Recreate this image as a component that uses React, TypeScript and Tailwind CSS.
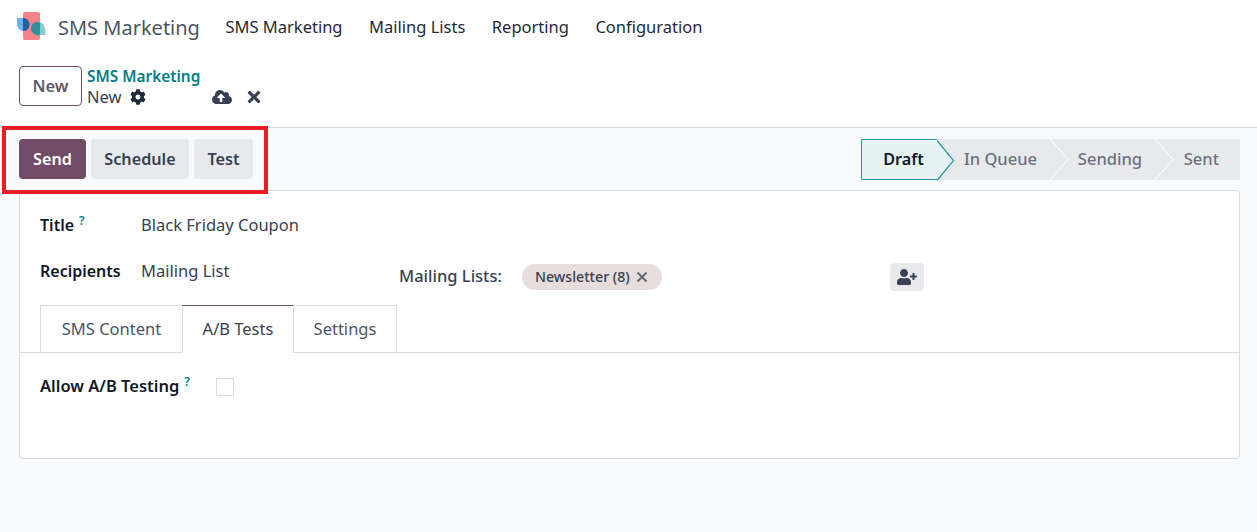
import { FaCog, FaCloudUploadAlt, FaTimes, FaUserPlus } from "react-icons/fa";

const menuItems = ["SMS Marketing", "Mailing Lists", "Reporting", "Configuration"];

function Logo() {
    return (
        <svg width="30" height="30" viewBox="0 0 30 30" className="mb-px shrink-0">
            <rect x="6" y="0" width="17" height="28" rx="2" fill="#fb8288" />
            <path d="M0 6 L6.5 6 C10 6 12.5 9 12.5 12.5 C12.5 16 10 19 6.5 19 C3 19 0 16 0 12 Z" fill="#6fb3ee" />
            <path d="M6 6 L6.5 6 C10 6 12.5 9 12.5 12.5 C12.5 16 10 19 6.5 19 L6 19 Z" fill="#1f5fa6" />
            <path d="M22 10 C26 10 28.5 14 28.5 23 L22 23 Z" fill="#7fd0cc" />
            <path d="M23 10.5 A6.5 6.5 0 1 0 23 22.5 Z" fill="#2f8f94" />
        </svg>
    );
}

function Chevron({ active }: { active?: boolean }) {
    return (
        <svg width="20" height="41" viewBox="0 0 20 41" className="absolute top-0 left-full z-10">
            {active ? (
                <path d="M0 0.5 L16.5 20.5 L0 40.5" fill="#e6f2f3" stroke="#1f9aa3" strokeWidth="1.2" />
            ) : (
                <>
                    <path d="M0 0 L18 20.5 L0 41 Z" fill="#e7e9ed" />
                    <path d="M0 0 L18 20.5 L0 41" fill="none" stroke="#ffffff" strokeWidth="1" />
                </>
            )}
        </svg>
    );
}

export default function App() {
    return (
        <div className="h-[532px] w-[1257px] overflow-hidden bg-[#f9fafb] font-['Noto_Sans','Open_Sans',sans-serif] text-[16.5px] text-[#374151] relative">
            {/* top nav */}
            <nav className="flex h-[55px] items-center bg-white pl-[17px]">
                <Logo />
                <span className="ml-[11px] text-[20px] text-[#4b5563]">SMS Marketing</span>
                <div className="ml-[25.5px] flex gap-[26.5px] text-[#1f2937]">
                    {menuItems.map((m) => (
                        <span key={m}>{m}</span>
                    ))}
                </div>
            </nav>

            {/* control panel */}
            <div className="flex h-[73px] items-start border-b border-[#d8dadd] bg-white pl-[19px] pt-[11px]">
                <button className="h-[40px] w-[63px] rounded-[4px] border border-[#714b67] font-semibold text-[#5f5a64]">New</button>
                <div className="ml-[5px] flex flex-col leading-[20px]">
                    <span className="mt-px text-[15.4px] font-semibold text-[#017e84]">SMS Marketing</span>
                    <div className="-mt-px flex h-[21px] items-center text-[#374151]">
                        <span>New</span>
                        <FaCog className="ml-[8px] text-[16px] text-[#1f2937]" />
                        <FaCloudUploadAlt className="ml-[66px] text-[20px] text-[#374151]" />
                        <FaTimes className="ml-[13px] text-[18px] text-[#374151]" />
                    </div>
                </div>
            </div>

            {/* status bar */}
            <div className="flex h-[62px] items-start justify-between pl-[19px] pr-[17px] pt-[11px]">
                <div className="flex gap-[5px] text-[16.2px] font-semibold">
                    <button className="h-[40px] w-[67px] rounded-[4px] bg-[#714b67] pt-px text-white">Send</button>
                    <button className="h-[40px] w-[98px] rounded-[4px] bg-[#e7e9ed] pt-px text-[#374151]">Schedule</button>
                    <button className="h-[40px] w-[59px] rounded-[4px] bg-[#e7e9ed] pt-px text-[#374151]">Test</button>
                </div>
                <div className="-ml-px flex h-[41px] bg-[#e7e9ed] font-medium text-[#6b7280]">
                    <div className="relative flex w-[76px] items-center justify-center rounded-l-[2px] border border-r-0 border-[#1f9aa3] bg-[#e6f2f3] pl-[8px] text-[16.2px] font-semibold text-[#111827]">
                        Draft
                        <Chevron active />
                    </div>
                    <div className="relative flex w-[113px] items-center justify-end pr-[13px]">
                        In Queue
                        <Chevron />
                    </div>
                    <div className="relative flex w-[105px] items-center justify-end pr-[13px]">
                        Sending
                        <Chevron />
                    </div>
                    <div className="flex w-[85px] items-center justify-end pr-[21px]">Sent</div>
                </div>
            </div>

            {/* form sheet */}
            <div className="ml-[19px] h-[269px] w-[1221px] rounded-[4px] border border-[#d8dadd] bg-white">
                <div className="flex items-center pl-[20px] pt-[20px] leading-[28px]">
                    <div className="w-[101px] text-[16px] font-semibold text-[#111827]">
                        Title<sup className="ml-[5px] text-[12px] font-semibold text-[#017e84]">?</sup>
                    </div>
                    <span>Black Friday Coupon</span>
                </div>
                <div className="mt-[23px] flex h-[30px] items-center pl-[20px]">
                    <div className="-mt-[12px] w-[101px] text-[16px] font-semibold text-[#111827]">Recipients</div>
                    <span className="-mt-[11px] w-[258px]">Mailing List</span>
                    <span className="-mt-px font-medium text-[#374151]">Mailing Lists:</span>
                    <span className="ml-[20px] flex h-[26px] items-center rounded-full bg-[#e7dddd] pl-[13px] pr-[14px] text-[14.2px] font-medium text-[#374151]">
                        Newsletter (8)
                        <svg width="12" height="12" viewBox="0 0 12 12" className="ml-[6px]">
                            <path d="M1.5 1.5 L10.5 10.5 M10.5 1.5 L1.5 10.5" stroke="#5f6672" strokeWidth="1.8" fill="none" />
                        </svg>
                    </span>
                    <button className="ml-[228px] -mt-px flex h-[28px] w-[34px] items-center justify-center rounded-[4px] bg-[#e7e9ed] text-[20px] text-[#374151]">
                        <FaUserPlus />
                    </button>
                </div>

                {/* tabs */}
                <div className="mt-[13px] flex h-[48px] border-b border-[#d8dadd] pl-[20px]">
                    <div className="flex h-[48px] w-[143px] items-center justify-center border border-b-0 border-[#d8dadd] text-[#4b5563]">SMS Content</div>
                    <div className="-ml-px flex h-[48px] w-[112px] items-center justify-center border border-[#d8dadd] border-t-[#714b67] border-b-white bg-white text-[#374151]">A/B Tests</div>
                    <div className="-ml-px flex h-[48px] w-[104px] items-center justify-center border border-b-0 border-[#d8dadd] text-[#4b5563]">Settings</div>
                </div>

                <div className="flex items-center pl-[20px] pt-[20px] leading-[28px]">
                    <div className="-mt-px w-[176px] text-[16.5px] font-semibold text-[#111827]">
                        Allow A/B Testing<sup className="ml-[5px] text-[12px] font-semibold text-[#017e84]">?</sup>
                    </div>
                    <span className="h-[18px] w-[18px] border border-[#d8dadd] bg-white" />
                </div>
            </div>

            {/* red highlight drawn on top of the screenshot */}
            <div className="absolute left-[2px] top-[126px] h-[68px] w-[266px] border-[4px] border-[#ed1c24]" />
        </div>
    );
}
